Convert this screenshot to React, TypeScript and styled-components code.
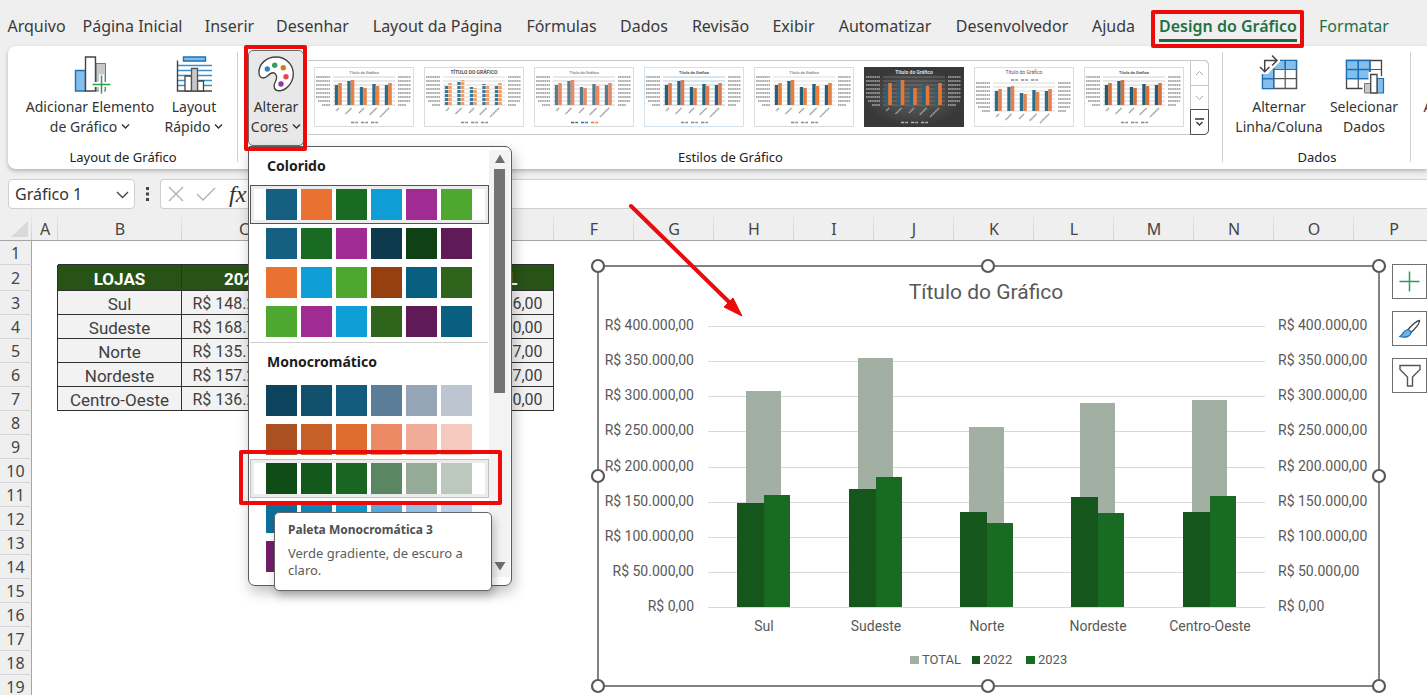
import React from "react";
import styled, { createGlobalStyle, css } from "styled-components";

const uiFont = `"Noto Sans", "Open Sans", sans-serif`;
const sheetFont = `Roboto, "Liberation Sans", sans-serif`;

const GlobalStyle = createGlobalStyle`
  * { box-sizing: border-box; }
  body { margin: 0; background: #fff; overflow: hidden; }
  button, input, select { font-family: inherit; font-size: inherit; color: inherit; }
  button { margin: 0; padding: 0; border: 0; background: none; }
`;

const App = styled.div`
  display: flex;
  flex-direction: column;
  height: 100vh;
  overflow: hidden;
  background: #efefef;
  color: #333;
  font-family: ${uiFont};
`;

/* ---------- tabs ---------- */

const TabBar = styled.nav`
  display: flex;
  flex: none;
  height: 46px;
  padding: 6px 0 0 2px;
  font-size: 16px;
`;

const Tab = styled.button<{ $width: number; $tone?: "green"; $active?: boolean }>`
  position: relative;
  flex: none;
  width: ${(p) => p.$width}px;
  height: 40px;
  white-space: nowrap;
  color: ${(p) => (p.$tone ? "#1e7145" : "#3a3a3a")};
  font-weight: ${(p) => (p.$active ? 600 : 400)};
  ${(p) =>
    p.$active &&
    css`
      &::after {
        content: "";
        position: absolute;
        left: 12px;
        right: 12px;
        bottom: 4px;
        height: 3px;
        background: #1b6b40;
      }
    `}
`;

const RedFrame = styled.span<{ $inset: string }>`
  position: absolute;
  inset: ${(p) => p.$inset};
  z-index: 5;
  border: 4px solid #ec0a0a;
  border-radius: 2px;
  pointer-events: none;
`;

/* ---------- ribbon ---------- */

const Ribbon = styled.section`
  position: relative;
  z-index: 3;
  display: flex;
  flex: none;
  height: 123px;
  margin-left: 8px;
  background: #fff;
  border-radius: 8px 0 0 8px;
  box-shadow: 0 2px 4px rgba(0, 0, 0, 0.25);
`;

const Group = styled.div<{ $width?: number }>`
  position: relative;
  display: flex;
  flex-direction: column;
  justify-content: space-between;
  ${(p) => (p.$width ? `flex: none; width: ${p.$width}px;` : "flex: 1; min-width: 0;")}
  &:not(:last-child)::after {
    content: "";
    position: absolute;
    top: 6px;
    right: 0;
    bottom: 7px;
    width: 1px;
    background: #d0d0d0;
  }
`;

const GroupBody = styled.div<{ $pad?: string }>`
  display: flex;
  align-items: flex-start;
  padding: ${(p) => p.$pad ?? "4px 0 0"};
`;

const GroupLabel = styled.div`
  height: 22px;
  font-size: 13px;
  line-height: 20px;
  text-align: center;
  color: #222;
  white-space: nowrap;
`;

const RibbonButton = styled.button<{ $width: number; $open?: boolean }>`
  display: flex;
  flex: none;
  flex-direction: column;
  align-items: center;
  width: ${(p) => p.$width}px;
  height: 96px;
  padding-top: 4px;
  border: 1px solid ${(p) => (p.$open ? "#6a6a6a" : "transparent")};
  border-radius: 5px;
  background: ${(p) => (p.$open ? "#e8e8e8" : "transparent")};
  font-size: 14px;
  line-height: 20px;
  white-space: nowrap;
  svg { flex: none; overflow: visible; }
`;

const Caption = styled.span<{ $alone?: boolean }>`
  margin-top: ${(p) => (p.$alone ? 42 : 2)}px;
`;

const MenuAnchor = styled.div`
  position: relative;
  flex: none;
  margin-right: 4px;
`;

const Gallery = styled.div`
  display: flex;
  flex: 1;
  min-width: 0;
  height: 75px;
  margin: 10px 14px 0 0;
  border: 1px solid #c8c8c8;
  border-left: 0;
  border-radius: 0 5px 5px 0;
`;

const Thumbs = styled.div`
  display: flex;
  flex: 1;
  gap: 10px;
  min-width: 0;
  padding: 6px 0 0 6px;
  overflow: hidden;
`;

const ThumbButton = styled.button`
  flex: none;
  width: 100px;
  height: 60px;
  svg { display: block; }
`;

const GalleryScroll = styled.div`
  display: flex;
  flex: none;
  flex-direction: column;
  width: 19px;
  margin: -1px -1px -1px 0;
`;

const ScrollStep = styled.button<{ $strong?: boolean }>`
  display: flex;
  flex: 1;
  align-items: center;
  justify-content: center;
  border: 1px solid ${(p) => (p.$strong ? "#505050" : "#c8c8c8")};
  border-radius: ${(p) => (p.$strong ? "0 0 5px 0" : "0")};
  &:first-child { border-top-right-radius: 5px; }
  &:not(:first-child) { margin-top: -1px; }
`;

/* ---------- colour menu ---------- */

const Menu = styled.div`
  position: absolute;
  top: 96px;
  left: 0;
  display: flex;
  width: 264px;
  height: 440px;
  border: 1px solid #5c5c5c;
  border-radius: 2px 7px 7px 7px;
  background: #fff;
  box-shadow: 2px 6px 14px rgba(0, 0, 0, 0.25);
`;

const MenuList = styled.div`
  flex: 1;
  padding: 0 1px;
  overflow: hidden;
`;

const MenuTitle = styled.h3`
  margin: 0;
  padding: 0 17px;
  height: 38px;
  font-size: 14px;
  font-weight: 700;
  line-height: 38px;
  color: #1c1c1c;
`;

const MenuRule = styled.hr`
  height: 1px;
  margin: 1px 0 0;
  border: 0;
  background: #cfcfcf;
`;

const Palette = styled.button<{ $state?: "focus" | "hover" }>`
  display: flex;
  gap: 4px;
  width: 239px;
  height: 39px;
  padding: 3px 15px;
  border: 1px solid
    ${(p) => (p.$state === "focus" ? "#555" : p.$state === "hover" ? "#c0c0c0" : "transparent")};
  box-shadow: ${(p) => (p.$state ? "inset 0 0 0 3px #ececec" : "none")};
`;

const Swatch = styled.span<{ $color: string }>`
  width: 31px;
  height: 31px;
  background: ${(p) => p.$color};
`;

const ScrollTrack = styled.div`
  display: flex;
  flex: none;
  flex-direction: column;
  align-items: center;
  width: 21px;
  margin: 3px 1px 8px 0;
  padding: 4px 0;
  background: #f3f3f3;
`;

const ScrollThumb = styled.div`
  width: 11px;
  height: 224px;
  margin: 5px 0 auto;
  background: #737373;
`;

const Tooltip = styled.div`
  position: absolute;
  top: 365px;
  left: 25px;
  z-index: 4;
  width: 218px;
  padding: 8px 13px 11px;
  border: 1px solid #666;
  border-radius: 5px;
  background: #fff;
  box-shadow: 2px 5px 10px rgba(0, 0, 0, 0.25);
  font-size: 13px;
  line-height: 17px;
  color: #5c5c5c;
`;

const TooltipTitle = styled.strong`
  display: block;
  margin-bottom: 7px;
  font-size: 12px;
  color: #505050;
`;

/* ---------- formula bar ---------- */

const FormulaBar = styled.div`
  display: flex;
  flex: none;
  align-items: center;
  height: 30px;
  margin: 10px 0 0 8px;
`;

const NameBox = styled.label`
  position: relative;
  width: 127px;
  height: 30px;
  select {
    width: 100%;
    height: 100%;
    padding: 0 6px;
    border: 1px solid #cfcfcf;
    border-radius: 4px;
    background: #fff;
    appearance: none;
    font-size: 16px;
  }
  svg { position: absolute; top: 12px; right: 6px; }
`;

const Dots = styled.svg`
  flex: none;
  margin: 0 10px;
`;

const FormulaBox = styled.div`
  display: flex;
  flex: 1;
  align-items: center;
  height: 30px;
  padding-left: 6px;
  border: 1px solid #cfcfcf;
  border-right: 0;
  border-radius: 4px 0 0 4px;
  background: #fff;
  button { display: flex; width: 30px; }
  input { flex: 1; border: 0; outline: 0; background: none; }
`;

const Fx = styled.button`
  padding-left: 2px;
  font-family: "Liberation Serif", serif;
  font-size: 24px;
  font-style: italic;
  line-height: 24px;
  color: #333;
`;

/* ---------- worksheet ---------- */

const SheetArea = styled.main`
  position: relative;
  flex: 1;
  min-height: 0;
  background: #fff;
`;

const Sheet = styled.table`
  width: max-content;
  min-width: 100%;
  table-layout: fixed;
  border-collapse: separate;
  border-spacing: 0;
  font-family: ${sheetFont};
  font-size: 16px;
  text-align: center;
`;

const ColumnHead = styled.th`
  height: 32px;
  padding: 9px 0 0;
  border-bottom: 1px solid #a6a6a6;
  background: linear-gradient(#efefef, #cfcfcf) right / 1px 100% no-repeat #efefef;
  font-family: ${uiFont};
  font-weight: 400;
  line-height: 22px;
  color: #444;
`;

const RowHead = styled.th<{ $height?: number }>`
  height: ${(p) => p.$height ?? 24}px;
  padding: 0;
  border-right: 1px solid #a6a6a6;
  border-bottom: 1px solid #d4d4d4;
  background: #efefef;
  font-family: ${uiFont};
  font-weight: 400;
  line-height: 20px;
  color: #444;
`;

const Cell = styled.td<{ $kind?: "head" | "name" | "value"; $edge?: "right" | "bottom" }>`
  padding: 2px 0 0;
  line-height: 20px;
  white-space: nowrap;
  ${(p) => p.$edge && `border-${p.$edge}: 1px solid #303030;`}
  ${(p) =>
    p.$kind &&
    css`
      border-right: 1px solid #303030;
      border-bottom: 1px solid #303030;
      background: ${p.$kind === "head" ? "#275317" : "#f2f2f2"};
      color: ${p.$kind === "head" ? "#fff" : "#404040"};
      font-size: ${p.$kind === "value" ? 16 : 17}px;
      font-weight: ${p.$kind === "head" ? 700 : 400};
    `}
`;

const ChartObject = styled.div`
  position: absolute;
  top: 49px;
  left: 590px;
  svg { display: block; }
`;

const ChartTools = styled.div`
  position: absolute;
  top: 55px;
  left: 1392px;
  display: flex;
  flex-direction: column;
  gap: 12px;
`;

const ChartTool = styled.button`
  display: flex;
  align-items: center;
  justify-content: center;
  width: 35px;
  height: 35px;
  border: 1px solid #6e6e6e;
  background: #fff;
`;

const Pointer = styled.svg`
  position: absolute;
  top: -8px;
  left: 620px;
  z-index: 2;
`;

/* ---------- icons ---------- */

const CaretSvg = styled.svg`
  margin-left: 4px;
  vertical-align: 2px;
`;

const CornerSvg = styled.svg`
  display: block;
  margin-left: 11px;
`;

const Caret = () => (
  <CaretSvg width="9" height="7" viewBox="0 0 9 7" fill="none" stroke="#333" strokeWidth="1.4">
    <path d="M1 1.500 4.500 5 8 1.500" />
  </CaretSvg>
);

const AddElementIcon = () => (
  <svg width="38" height="40" viewBox="0 0 38 40">
    <path d="M25 8.500h9.500v27.500h-9.500z" fill="#c8c8c8" stroke="#777" />
    <path d="M4.500 15.500h10v20.500h-10z" fill="#83beec" stroke="#1f6fb5" strokeWidth="1.400" />
    <path d="M14.500 2h10v34h-10z" fill="#fff" stroke="#444" strokeWidth="1.400" />
    <path d="M20.500 29.500h20M30.500 19.500v20" stroke="#fff" strokeWidth="5" />
    <path d="M21.500 29.500h18M30.500 20.500v18" stroke="#2e9e4f" strokeWidth="1.500" />
  </svg>
);

const QuickLayoutIcon = () => (
  <svg width="38" height="40" viewBox="0 0 38 40">
    <path d="M8.500 2h22v4h-22z" fill="#83beec" stroke="#1f6fb5" strokeWidth="1.400" />
    <path d="M3 10.500h34M3 15.500h34M3 20.500h34M3 25.500h34M3 30.500h34" stroke="#3d8fc9" strokeWidth="1.500" />
    <path d="M2.500 5.500v30.500H37" fill="none" stroke="#444" strokeWidth="1.400" />
    <path d="M10 21h6.500v15H10zM22.500 26h6v10h-6z" fill="#fff" stroke="#444" strokeWidth="1.300" />
    <path d="M16.500 13.500h6v22.500h-6z" fill="#c8c8c8" stroke="#555" strokeWidth="1.300" />
  </svg>
);

const PaletteIcon = () => (
  <svg width="38" height="40" viewBox="0 0 38 40">
    <path
      d="M2 18C1.500 9 9.500 2 19 2 29 2 36.300 9.500 36.300 19 36.300 28 29 35.700 22 35.700 17 35.700 16 31 18 27.500 20 24 20.500 21 18 18.500 15.500 16.500 13 18.500 10.500 21 8 23.500 2.500 24.500 2 18Z"
      fill="#fff"
      stroke="#444"
      strokeWidth="1.400"
    />
    <circle cx="10.300" cy="14" r="2.700" fill="#2a85c8" />
    <circle cx="17.700" cy="10.300" r="2.700" fill="#35a05a" />
    <circle cx="26.300" cy="12.700" r="2.700" fill="#d47a1c" />
    <circle cx="29" cy="21.700" r="2.700" fill="#de4a50" />
    <circle cx="24" cy="29" r="2.700" fill="#8c3a9e" />
  </svg>
);

const SwitchIcon = () => (
  <svg width="38" height="40" viewBox="0 0 38 40">
    <path d="M2.500 5.500h34v28h-34z" fill="#fff" stroke="#444" strokeWidth="1.300" />
    <path d="M2.500 5.500h34v9h-34zM2.500 14.500h11.300v19H2.500z" fill="#83beec" />
    <path d="M2.500 14.500h34M2.500 23.700h34M13.800 5.500v28M25.200 5.500v28M36.500 5.500v28M2.500 33.500h34" stroke="#555" strokeWidth="1.200" />
    <path d="M2.500 33.500V14.500h11.300v19zM2.500 23.700h11.300M13.800 5.500h22.700v9H13.800zM25.200 5.500v9" fill="none" stroke="#1f6fb5" strokeWidth="1.200" />
    <path d="M0 3h20v3.500L8 19H0z" fill="#fff" />
    <path d="M4.700 16.700V5.500h12M12 .500l5 5-5 5M0 12l4.700 4.700L9.400 12" fill="none" stroke="#444" strokeWidth="1.500" />
  </svg>
);

const SelectDataIcon = () => (
  <svg width="38" height="40" viewBox="0 0 38 40">
    <path d="M1.500 5.500h35v28h-35z" fill="#fff" stroke="#444" strokeWidth="1.300" />
    <path d="M1.500 5.500H25v18.200H1.500z" fill="#83beec" />
    <path d="M1.500 14.500h35M1.500 23.700h35M13.300 5.500v28M25 5.500v28" stroke="#555" strokeWidth="1.200" />
    <path d="M1.500 5.500H25v18.200H1.500zM1.500 14.500H25M13.300 5.500v18.200" fill="none" stroke="#1f6fb5" strokeWidth="1.300" />
    <path d="M17.500 26h6v-9h10.500v4h7v19h-23.500z" fill="#fff" />
    <path d="M19.500 28.500h6V38h-6z" fill="#c8c8c8" stroke="#777" />
    <path d="M32 23.500h6.500V38H32z" fill="#83beec" stroke="#1f6fb5" strokeWidth="1.200" />
    <path d="M25.700 19.500H32V38h-6.300z" fill="#fff" stroke="#444" strokeWidth="1.300" />
  </svg>
);

/* ---------- gallery thumbnails ---------- */

type ThumbStyle = {
  title: string;
  bold?: boolean;
  dark?: boolean;
  colors: [string, string];
  line: string;
  border: string;
  legendTop?: boolean;
  striped?: boolean;
  legend?: string[];
  titleSize?: number;
};

const thumbs: ThumbStyle[] = [
  { title: "Título do Gráfico", colors: ["#2c6d8a", "#e88345"], line: "#c4c4c4", border: "#dcdcdc" },
  { title: "TÍTULO DO GRÁFICO", bold: true, colors: ["#3b7893", "#eda070"], line: "#cfcfcf", border: "#dcdcdc", striped: true, titleSize: 5 },
  { title: "Título do Gráfico", colors: ["#557d8e", "#e88a66"], line: "#c4c4c4", border: "#dcdcdc", legend: ["#2f7d4a", "#2473a8", "#e8743b"] },
  { title: "Título do Gráfico", bold: true, colors: ["#25607d", "#e07c4f"], line: "#9dbfd4", border: "#cfe2ee" },
  { title: "Título do Gráfico", colors: ["#23617d", "#ea7c3c"], line: "#d6d6d6", border: "#dcdcdc" },
  { title: "Título do Gráfico", bold: true, dark: true, colors: ["#24627e", "#e87634"], line: "#7c7c7c", border: "#3a3a3a", titleSize: 5 },
  { title: "Título do Gráfico", colors: ["#2c6d8a", "#e08350"], line: "#d2d2d2", border: "#dcdcdc", legendTop: true, titleSize: 5 },
  { title: "Título do Gráfico", bold: true, colors: ["#1f5c78", "#d9713c"], line: "#c4c4c4", border: "#dcdcdc" },
];

const thumbHeights = [
  [20, 22],
  [24, 25],
  [18, 17],
  [21, 19],
  [20, 22],
];

const Thumb = ({ s, id }: { s: ThumbStyle; id: number }) => {
  const base = s.legendTop ? 44 : 38;
  const ink = s.dark ? "#b5b5b5" : "#8a8a8a";
  const dash = s.legend ?? [ink, ink, ink];
  return (
    <svg width="100" height="60" viewBox="0 0 100 60">
      <defs>
        <radialGradient id={`bg${id}`}>
          <stop offset="0" stopColor="#626262" />
          <stop offset="1" stopColor="#383838" />
        </radialGradient>
      </defs>
      <rect x="0.500" y="0.500" width="99" height="59" fill={s.dark ? `url(#bg${id})` : "#fff"} stroke={s.border} />
      <text
        x="50"
        y="6.500"
        textAnchor="middle"
        fontFamily="Roboto, sans-serif"
        fontSize={s.titleSize ?? 4}
        fontWeight={s.bold ? 700 : 400}
        fill={s.dark ? "#ddd" : "#555"}
      >
        {s.title}
      </text>
      {[0, 1, 2, 3, 4, 5, 6, 7].map((i) => (
        <g key={i}>
          <path d={`M19 ${base - i * 4}h62`} stroke={s.line} strokeWidth="0.800" />
          <path d={`M${i < 2 ? 8 - i * 4 : 2} ${base - i * 4}H16M84 ${base - i * 4}h${i < 2 ? 8 + i * 4 : 13}`} stroke={ink} strokeWidth="1.800" strokeDasharray="1.600 0.500" opacity="0.700" />
        </g>
      ))}
      {thumbHeights.map(([a, b], i) => {
        const x = 21 + i * 12.5;
        return (
          <g key={i}>
            <path d={`M${x + 1.500} ${base}v${-a}`} stroke={s.colors[0]} strokeWidth="3.400" strokeDasharray={s.striped ? "3 1" : undefined} />
            <path d={`M${x + 5} ${base}v${-b}`} stroke={s.colors[1]} strokeWidth="3.600" strokeDasharray={s.striped ? "3 1" : undefined} />
            <path
              d={`M${x + 4} ${base + 3}l${-[3, 6, 5, 7, 9][i]} ${[3, 6, 5, 7, 9][i]}`}
              stroke={ink}
              strokeWidth="1.600"
              strokeDasharray="1.500 0.400"
              opacity="0.800"
            />
          </g>
        );
      })}
      {dash.map((c, i) => (
        <path key={i} d={`M${37 + i * 10} ${s.legendTop ? 13 : 55.500}h7`} stroke={c} strokeWidth="1.600" strokeDasharray="3 0.700 1 0.400" />
      ))}
    </svg>
  );
};

/* ---------- chart ---------- */

const stores = [
  { name: "Sul", total: 307000, y22: 148200, y23: 159800 },
  { name: "Sudeste", total: 354500, y22: 168000, y23: 185000 },
  { name: "Norte", total: 256000, y22: 135700, y23: 120000 },
  { name: "Nordeste", total: 290500, y22: 157000, y23: 133300 },
  { name: "Centro-Oeste", total: 294500, y22: 135700, y23: 158300 },
];

const axis = ["0,00", "50.000,00", "100.000,00", "150.000,00", "200.000,00", "250.000,00", "300.000,00", "350.000,00", "400.000,00"];

const Chart = () => {
  const base = 349;
  const h = (v: number) => Math.round((v / 400000) * 281);
  const left = 118;
  const step = 111.3;
  return (
    <svg width="798" height="436" viewBox="0 0 798 436" fontFamily={`Roboto, "Liberation Sans", sans-serif`} fontSize="14" fill="#595959">
      <rect x="8" y="8" width="781" height="420" fill="#fff" stroke="#595959" strokeWidth="1.500" />
      <text x="396" y="41" fontSize="21" textAnchor="middle">Título do Gráfico</text>
      {axis.map((v, i) => {
        const y = base - Math.round(i * 35.1);
        return (
          <g key={v}>
            <path d={`M${left} ${y + 0.5}h557`} stroke="#d9d9d9" />
            <text x="104" y={y + 4} textAnchor="end">R$ {v}</text>
            <text x="688" y={y + 4}>R$ {v}</text>
          </g>
        );
      })}
      {stores.map((s, i) => {
        const c = Math.round(left + 0.8 + step * (i + 0.5));
        return (
          <g key={s.name}>
            <rect x={c - 18} y={base - h(s.total)} width="35" height={h(s.total)} fill="#a1b0a3" />
            <rect x={c - 27} y={base - h(s.y22)} width="27" height={h(s.y22)} fill="#14561b" />
            <rect x={c} y={base - h(s.y23)} width="26" height={h(s.y23)} fill="#196b24" />
            <text x={c} y="373" textAnchor="middle">{s.name}</text>
          </g>
        );
      })}
      <g fontSize="13">
        <rect x="320" y="398" width="9" height="8" fill="#a1b0a3" />
        <text x="332" y="406">TOTAL</text>
        <rect x="382" y="398" width="8" height="8" fill="#14561b" />
        <text x="393" y="406">2022</text>
        <rect x="436" y="398" width="9" height="8" fill="#196b24" />
        <text x="448" y="406">2023</text>
      </g>
      {[[8, 8], [398, 8], [789, 8], [8, 218], [789, 218], [8, 428], [398, 428], [789, 428]].map(([x, y]) => (
        <circle key={`${x}-${y}`} cx={x} cy={y} r="6" fill="#fff" stroke="#595959" strokeWidth="2.200" />
      ))}
    </svg>
  );
};

/* ---------- data ---------- */

const tabs: { label: string; width: number; tone?: "green"; active?: boolean }[] = [
  { label: "Arquivo", width: 69 },
  { label: "Página Inicial", width: 123 },
  { label: "Inserir", width: 71 },
  { label: "Desenhar", width: 95 },
  { label: "Layout da Página", width: 155 },
  { label: "Fórmulas", width: 93 },
  { label: "Dados", width: 72 },
  { label: "Revisão", width: 81 },
  { label: "Exibir", width: 65 },
  { label: "Automatizar", width: 118 },
  { label: "Desenvolvedor", width: 136 },
  { label: "Ajuda", width: 67 },
  { label: "Design do Gráfico", width: 162, tone: "green", active: true },
  { label: "Formatar", width: 90, tone: "green" },
];

const colorful = [
  ["#156082", "#e97132", "#196b24", "#0f9ed5", "#a02b93", "#4ea72e"],
  ["#156082", "#196b24", "#a02b93", "#0d3a4e", "#0f4016", "#601a58"],
  ["#e97132", "#0f9ed5", "#4ea72e", "#964010", "#095f80", "#2f641c"],
  ["#4ea72e", "#a02b93", "#0f9ed5", "#2f641c", "#601a58", "#095f80"],
];

const mono = [
  ["#0c435d", "#11516e", "#135c7d", "#5c7d98", "#96a6b8", "#bcc5d0"],
  ["#aa5122", "#c66028", "#de6c2f", "#ec8a66", "#f0ac98", "#f4c9be"],
  ["#0f4c16", "#14591c", "#196623", "#5b8662", "#95aa97", "#bcc8be"],
  ["#0b719a", "#0d86b6", "#1097cc", "#5aa9da", "#96c0e4", "#bdd5ec"],
  ["#731e6a", "#88247d", "#99298d", "#ac64a2", "#c196bb", "#d6bdd2"],
];

const sheetRows: Record<number, string[]> = {
  2: ["LOJAS", "2022", "2023", "TOTAL"],
  3: ["Sul", "R$ 148.250,00", "R$ 159.756,00", "R$ 308.006,00"],
  4: ["Sudeste", "R$ 168.740,00", "R$ 185.760,00", "R$ 354.500,00"],
  5: ["Norte", "R$ 135.780,00", "R$ 120.307,00", "R$ 256.087,00"],
  6: ["Nordeste", "R$ 157.250,00", "R$ 133.257,00", "R$ 290.507,00"],
  7: ["Centro-Oeste", "R$ 136.220,00", "R$ 158.280,00", "R$ 294.500,00"],
};

const columns = "ABCDEFGHIJKLMNOP".split("");
const columnWidth = (c: string) => (c === "A" ? 26 : "BCDE".includes(c) ? 124 : 80);
const cellKind = (row: number, col: number) => (row === 2 ? "head" : col === 0 ? "name" : "value");

export default function Page() {
  return (
    <App>
      <GlobalStyle />
      <TabBar>
        {tabs.map((t) => (
          <Tab key={t.label} $width={t.width} $tone={t.tone} $active={t.active}>
            {t.label}
            {t.active && <RedFrame $inset="4px 5px -2px 4px" />}
          </Tab>
        ))}
      </TabBar>

      <Ribbon>
        <Group $width={230}>
          <GroupBody $pad="4px 0 0 12px">
            <RibbonButton $width={140}>
              <AddElementIcon />
              <Caption>Adicionar Elemento<br />de Gráfico<Caret /></Caption>
            </RibbonButton>
            <RibbonButton $width={68}>
              <QuickLayoutIcon />
              <Caption>Layout<br />Rápido<Caret /></Caption>
            </RibbonButton>
          </GroupBody>
          <GroupLabel>Layout de Gráfico</GroupLabel>
        </Group>

        <Group>
          <GroupBody $pad="4px 0 0 10px">
            <MenuAnchor>
              <RibbonButton $width={56} $open>
                <PaletteIcon />
                <Caption>Alterar<br />Cores<Caret /></Caption>
              </RibbonButton>
              <RedFrame $inset="-5px -3px -5px -4px" />
              <Menu>
                <MenuList>
                  <MenuTitle>Colorido</MenuTitle>
                  {colorful.map((row, i) => (
                    <Palette key={i} aria-label={`Paleta Colorida ${i + 1}`} $state={i === 0 ? "focus" : undefined}>
                      {row.map((c) => <Swatch key={c} $color={c} />)}
                    </Palette>
                  ))}
                  <MenuRule />
                  <MenuTitle>Monocromático</MenuTitle>
                  {mono.map((row, i) => (
                    <Palette key={i} aria-label={`Paleta Monocromática ${i + 1}`} $state={i === 2 ? "hover" : undefined}>
                      {row.map((c) => <Swatch key={c} $color={c} />)}
                    </Palette>
                  ))}
                </MenuList>
                <ScrollTrack>
                  <svg width="12" height="10" viewBox="0 0 12 10"><path d="M6 .500 11 9H1Z" fill="#6e6e6e" /></svg>
                  <ScrollThumb />
                  <svg width="12" height="12" viewBox="0 0 12 12"><path d="M6 9.500 11.500 1H.500Z" fill="#6e6e6e" /></svg>
                </ScrollTrack>
                <Tooltip role="tooltip">
                  <TooltipTitle>Paleta Monocromática 3</TooltipTitle>
                  Verde gradiente, de escuro a claro.
                </Tooltip>
                <RedFrame $inset="303px 9px 80px -10px" />
              </Menu>
            </MenuAnchor>
            <Gallery>
              <Thumbs>
                {thumbs.map((s, i) => (
                  <ThumbButton key={i} aria-label={`Estilo ${i + 1}`}><Thumb s={s} id={i} /></ThumbButton>
                ))}
              </Thumbs>
              <GalleryScroll>
                <ScrollStep aria-label="Anterior">
                  <svg width="9" height="6" viewBox="0 0 9 6" fill="none" stroke="#aaa"><path d="M1 5 4.500 1.500 8 5" /></svg>
                </ScrollStep>
                <ScrollStep aria-label="Próximo">
                  <svg width="9" height="6" viewBox="0 0 9 6" fill="none" stroke="#aaa"><path d="M1 1 4.500 4.500 8 1" /></svg>
                </ScrollStep>
                <ScrollStep aria-label="Mais" $strong>
                  <svg width="9" height="9" viewBox="0 0 9 9" fill="none" stroke="#333" strokeWidth="1.300"><path d="M0 1h9M1.500 4 4.500 7 7.500 4" /></svg>
                </ScrollStep>
              </GalleryScroll>
            </Gallery>
          </GroupBody>
          <GroupLabel>Estilos de Gráfico</GroupLabel>
        </Group>

        <Group $width={188}>
          <GroupBody $pad="4px 0 0 10px">
            <RibbonButton $width={92}>
              <SwitchIcon />
              <Caption>Alternar<br />Linha/Coluna</Caption>
            </RibbonButton>
            <RibbonButton $width={78}>
              <SelectDataIcon />
              <Caption>Selecionar<br />Dados</Caption>
            </RibbonButton>
          </GroupBody>
          <GroupLabel>Dados</GroupLabel>
        </Group>

        <Group $width={16}>
          <GroupBody $pad="4px 0 0 4px">
            <RibbonButton $width={94}>
              <Caption $alone>Alterar Tipo</Caption>
            </RibbonButton>
          </GroupBody>
        </Group>
      </Ribbon>

      <FormulaBar>
        <NameBox>
          <select aria-label="Caixa de nome" defaultValue="Gráfico 1"><option>Gráfico 1</option></select>
          <svg width="13" height="8" viewBox="0 0 13 8" fill="none" stroke="#444" strokeWidth="1.300"><path d="M1 1 6.500 6.500 12 1" /></svg>
        </NameBox>
        <Dots width="5" height="14" viewBox="0 0 5 14" fill="#444">
          <path d="M1 0h3v3H1zM1 5.500h3v3H1zM1 11h3v3H1z" />
        </Dots>
        <FormulaBox>
          <button aria-label="Cancelar">
            <svg width="18" height="18" viewBox="0 0 18 18" fill="none" stroke="#b0b0b0" strokeWidth="1.300"><path d="M2 2 16 16M16 2 2 16" /></svg>
          </button>
          <button aria-label="Inserir">
            <svg width="20" height="18" viewBox="0 0 20 18" fill="none" stroke="#b0b0b0" strokeWidth="1.300"><path d="M0 9 6 15 18 3" /></svg>
          </button>
          <Fx>fx</Fx>
          <input aria-label="Barra de fórmulas" />
        </FormulaBox>
      </FormulaBar>

      <SheetArea>
        <Sheet>
          <colgroup>
            <col style={{ width: 32 }} />
            {columns.map((c) => <col key={c} style={{ width: columnWidth(c) }} />)}
          </colgroup>
          <thead>
            <tr>
              <ColumnHead aria-label="Selecionar tudo">
                <CornerSvg width="18" height="17" viewBox="0 0 18 17">
                  <path d="M17 0v16H0z" fill="#d9d9d9" />
                </CornerSvg>
              </ColumnHead>
              {columns.map((c) => <ColumnHead key={c} scope="col">{c}</ColumnHead>)}
            </tr>
          </thead>
          <tbody>
            {Array.from({ length: 19 }, (_, i) => i + 1).map((n) => (
              <tr key={n}>
                <RowHead scope="row" $height={n === 2 ? 26 : 24}>{n}</RowHead>
                <Cell $edge={sheetRows[n] ? "right" : undefined} />
                {sheetRows[n]
                  ? sheetRows[n].map((v, i) => <Cell key={i} $kind={cellKind(n, i)}>{v}</Cell>)
                  : <Cell colSpan={4} $edge={n === 1 ? "bottom" : undefined} />}
                <Cell colSpan={11} />
              </tr>
            ))}
          </tbody>
        </Sheet>

        <ChartObject><Chart /></ChartObject>

        <ChartTools>
          <ChartTool aria-label="Elementos do Gráfico">
            <svg width="21" height="21" viewBox="0 0 21 21" stroke="#2e9e4f" strokeWidth="1.500"><path d="M.500 10.500h20M10.500.500v20" /></svg>
          </ChartTool>
          <ChartTool aria-label="Estilos de Gráfico">
            <svg width="22" height="22" viewBox="0 0 22 22" strokeLinejoin="round">
              <path d="M9 11.500C13 7 17.500 3 20.500 2.500 21 5 16 11 12 14.500Z" fill="#fff" stroke="#444" strokeWidth="1.300" />
              <path d="M9 11.500c1.500.400 2.600 1.500 3 3-.5 4-5 5.500-11.500 4C4 17.500 4 12 9 11.500Z" fill="#6db3e8" stroke="#1f6fb5" strokeWidth="1.200" />
            </svg>
          </ChartTool>
          <ChartTool aria-label="Filtros de Gráfico">
            <svg width="22" height="23" viewBox="0 0 22 23" fill="none" stroke="#555" strokeWidth="1.400"><path d="M1 1.500h20v4l-7.500 7.500v9h-5v-9L1 5.500z" /></svg>
          </ChartTool>
        </ChartTools>

        <Pointer width="130" height="120" viewBox="0 0 130 120" fill="#ea0c0c" stroke="#ea0c0c">
          <path d="M11 5 109 101" strokeWidth="4" strokeLinecap="round" />
          <path d="M122 115 104 106 113 97Z" />
        </Pointer>
      </SheetArea>
    </App>
  );
}
